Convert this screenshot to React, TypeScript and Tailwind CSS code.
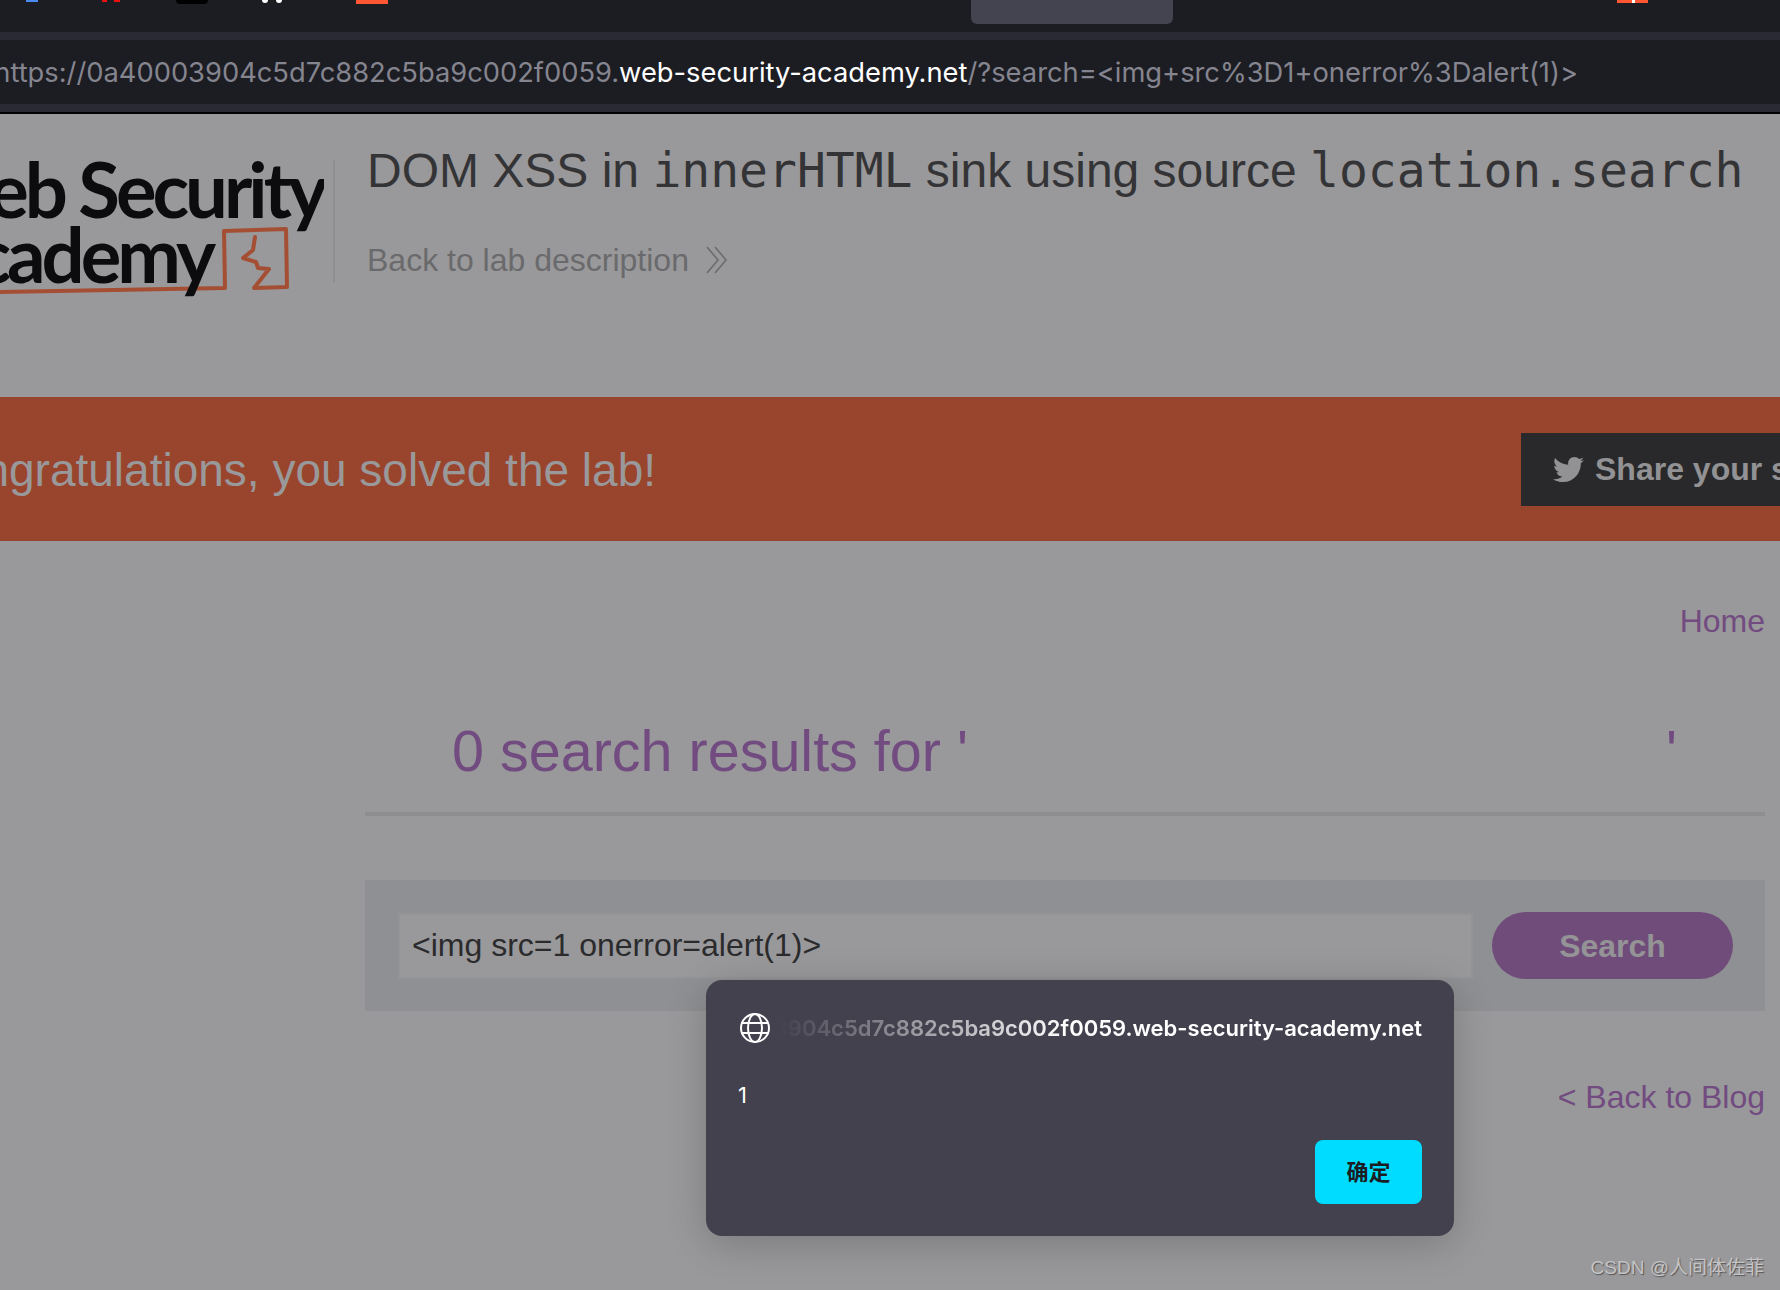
import { FaTwitter } from "react-icons/fa";

const sans = "font-['Liberation_Sans',Arial,sans-serif]";
const mono = "font-['DejaVu_Sans_Mono',monospace] text-[48px]";

function LogoMark() {
    return (
        <svg className="absolute left-0 top-0" width="334" height="200" viewBox="0 114 334 200" fill="none">
            <path
                d="M0 292 C60 291 120 290 225 288 L224 231 L286 229 L287 287 L254 288 L269 269 L258 268 L256 262 L243 258 L253 250 L255 237"
                stroke="#a44f34"
                strokeWidth="4"
                strokeLinejoin="round"
                strokeLinecap="round"
            />
        </svg>
    );
}

function Header() {
    return (
        <header className="flex h-[283px]">
            <div className="relative w-[334px] h-[283px] shrink-0">
                <LogoMark />
                <div className="relative flex flex-col items-end pt-[42px] overflow-hidden h-[200px] w-[324px] font-['Lato',sans-serif] font-bold text-[#0c0c0e] text-[76px] leading-[65px] tracking-[-4px] whitespace-nowrap">
                    <span>Web Security</span>
                    <span className="mr-[112px]">Academy</span>
                </div>
            </div>
            <div className="w-[2px] h-[123px] mt-[46px] bg-[#8f8f91] -ml-[1px]"></div>
            <div className={`pl-[32px] pt-[21px] ${sans}`}>
                <h2 className="text-[48px] leading-[70px] text-[#343437] whitespace-nowrap">
                    DOM XSS in <code className={mono}>innerHTML</code> sink using source{" "}
                    <code className={mono}>location.search</code>
                </h2>
                <a className="flex items-center mt-[34px] text-[32px] leading-[40px] text-[#6a6a6c]">
                    Back to lab description
                    <svg className="ml-[17px]" width="22" height="28" viewBox="0 0 22 28" fill="none" stroke="#6a6a6c" strokeWidth="1.5">
                        <path d="M1 1 L12 14 L1 27" />
                        <path d="M9 1 L20 14 L9 27" />
                    </svg>
                </a>
            </div>
        </header>
    );
}

export default function App() {
    return (
        <div className={`relative w-[1780px] h-[1290px] overflow-hidden bg-[#99999b] ${sans}`}>
            {/* browser chrome */}
            <div className="relative h-[32px] bg-[#1c1c23]">
                <div className="flex h-[4px]">
                    <div className="ml-[26px] w-[12px] h-[2px] bg-[#4a8af0]"></div>
                    <div className="ml-[64px] w-[5px] h-[2px] bg-[#f01010]"></div>
                    <div className="ml-[7px] w-[6px] h-[2px] bg-[#f01010]"></div>
                    <div className="ml-[56px] w-[32px] h-[4px] bg-black rounded-b-sm"></div>
                    <div className="ml-[54px] w-[6px] h-[3px] bg-white rounded-b-sm"></div>
                    <div className="ml-[8px] w-[6px] h-[3px] bg-white rounded-b-sm"></div>
                    <div className="ml-[74px] w-[32px] h-[4px] bg-[#ff5733]"></div>
                </div>
                <div className="absolute left-[971px] top-0 w-[202px] h-[24px] bg-[#444350] rounded-b-md"></div>
                <div className="absolute left-[1617px] top-0 flex h-[3px]">
                    <div className="w-[15px] bg-[#ff5733]"></div>
                    <div className="w-[3px] bg-white"></div>
                    <div className="w-[13px] bg-[#ff5733]"></div>
                </div>
            </div>
            <div className="h-[8px] bg-[#2a2a35]"></div>
            <div className="h-[64px] bg-[#1c1c23] overflow-hidden">
                <div className="w-[1578px] flex justify-end font-['Inter',sans-serif] text-[27.3px] leading-[50px] pt-[8px] text-[#85858f] whitespace-nowrap">
                    <span>
                        https://0a40003904c5d7c882c5ba9c002f0059.<span className="text-white">web-security-academy.net</span>
                        /?search=&lt;img+src%3D1+onerror%3Dalert(1)&gt;
                    </span>
                </div>
            </div>
            <div className="h-[8px] bg-[#2a2a35]"></div>
            <div className="h-[2px] bg-black"></div>

            <Header />

            {/* solved banner */}
            <div className="flex items-center justify-between h-[144px] bg-[#99452d]">
                <div className="flex justify-end w-[656px] overflow-hidden pt-[3px]">
                    <span className="text-[46px] text-[#99999b] whitespace-nowrap">Congratulations, you solved the lab!</span>
                </div>
                <div className="flex items-center w-[259px] h-[73px] pl-[32px] gap-[11px] bg-[#29292b] text-[#929294] font-bold text-[32px] whitespace-nowrap overflow-hidden shrink-0">
                    <FaTwitter className="text-[31px] shrink-0" />
                    <span>Share your skills!</span>
                </div>
            </div>

            {/* main column */}
            <main className="pl-[365px] pr-[15px]">
                <div className="flex justify-end pt-[60px] text-[32px] leading-[40px] text-[#724b80]">
                    <a>Home</a>
                </div>
                <div className="flex justify-between pl-[87px] pr-[88px] mt-[75px] h-[96px] text-[57.5px] leading-[70px] text-[#724b80] border-b-4 border-[#8e8e90] box-content">
                    <h1>0 search results for '</h1>
                    <span>'</span>
                </div>
                <div className="flex items-center gap-[19px] h-[131px] mt-[64px] pl-[33px] pr-[32px] bg-[#8f9093]">
                    <div className="flex items-center flex-1 h-[66px] px-[12px] pb-[2px] bg-[#99999b] border-2 border-[#949496] text-[32px] text-[#2b2b2d]">
                        &lt;img src=1 onerror=alert(1)&gt;
                    </div>
                    <button className="w-[241px] h-[67px] rounded-[34px] bg-[#704c7a] text-[#949496] font-bold text-[32px]">
                        Search
                    </button>
                </div>
                <div className="flex justify-end mt-[66px] text-[32px] leading-[40px] text-[#724b80]">
                    <a>&lt; Back to Blog</a>
                </div>
            </main>

            {/* alert dialog */}
            <div className="absolute left-[706px] top-[980px] w-[748px] h-[256px] rounded-[16px] bg-[#43414e] pl-[33px] pr-[32px] pt-[32px] shadow-[0_8px_40px_rgba(0,0,0,0.2)] font-['Inter',sans-serif]">
                <div className="flex items-center h-[32px]">
                    <svg className="shrink-0" width="32" height="32" viewBox="0 0 32 32" fill="none" stroke="white" strokeWidth="2">
                        <circle cx="16" cy="16" r="14" />
                        <ellipse cx="16" cy="16" rx="7" ry="14" />
                        <path d="M3 11 H29 M3 21 H29" />
                    </svg>
                    <div className="flex-1 min-w-0 ml-[8px] flex justify-end overflow-hidden [mask-image:linear-gradient(to_right,transparent,white_45%)]">
                        <span className="text-[22px] font-semibold text-white whitespace-nowrap">
                            0a40003904c5d7c882c5ba9c002f0059.web-security-academy.net
                        </span>
                    </div>
                </div>
                <div className="-ml-[1px] mt-[37px] text-[22px] leading-[28px] text-white">1</div>
                <div className="flex justify-end mt-[31px]">
                    <button className="w-[107px] h-[64px] rounded-[8px] bg-[#00dcff] text-[#1c1c23] font-bold text-[22px] font-['Inter','Noto_Sans_CJK_SC',sans-serif]">
                        确定
                    </button>
                </div>
            </div>

            <div className="absolute right-[16px] bottom-[8px] text-[19px] leading-[28px] text-[#c4c4c6] [text-shadow:1px_1px_1px_rgba(0,0,0,0.45)] font-['Liberation_Sans','Noto_Sans_CJK_SC',sans-serif]">
                CSDN @人间体佐菲
            </div>
        </div>
    );
}
